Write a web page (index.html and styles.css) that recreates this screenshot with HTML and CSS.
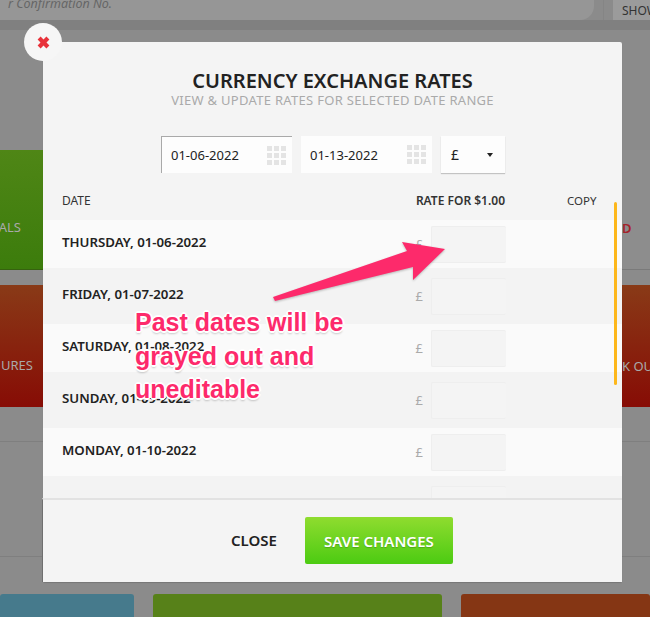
FILE: index.html
```html
<!DOCTYPE html>
<html lang="en">
<head>
    <meta charset="UTF-8">
    <title>Currency Exchange Rates</title>
    <link rel="stylesheet" href="styles.css">
</head>
<body>
    <!-- dimmed page behind the modal -->
    <div class="page">
        <div class="topbar">
            <div class="search">r Confirmation No.</div>
            <div class="show-wrap"><span class="show">SHOW</span></div>
        </div>
        <div class="band"></div>
        <div class="tiles">
            <div class="tile green"><span class="tile-label als-label">ALS</span></div>
            <div class="tile"></div>
            <div class="tile gray"><span class="tile-label red-label">D</span></div>
            <div class="tile orange"><span class="tile-label ures-label">URES</span></div>
            <div class="tile"></div>
            <div class="tile orange"><span class="tile-label">K OUT</span></div>
        </div>
        <div class="rule first-rule"></div>
        <div class="rule second-rule"></div>
        <div class="bottom-tiles">
            <div class="blue"></div>
            <div class="green-flat"></div>
            <div class="rust"></div>
        </div>
    </div>

    <div class="modal">
        <button class="close-x" type="button" aria-label="Close">
            <svg width="13" height="13" viewBox="0 0 13 13"><path d="M3.6 .6 L6.5 3.5 L9.4 .6 L12.4 3.6 L9.5 6.5 L12.4 9.4 L9.4 12.4 L6.5 9.5 L3.6 12.4 L.6 9.4 L3.5 6.5 L.6 3.6 Z" fill="#e8323a"/></svg>
        </button>

        <h1>CURRENCY EXCHANGE RATES</h1>
        <p class="subtitle">VIEW &amp; UPDATE RATES FOR SELECTED DATE RANGE</p>

        <div class="filters">
            <div class="date-box focused">
                <span>01-06-2022</span>
                <svg class="cal" width="19" height="19" viewBox="0 0 19 19"><path d="M0 0h5v5H0zM7 0h5v5H7zM14 0h5v5h-5zM0 7h5v5H0zM7 7h5v5H7zM14 7h5v5h-5zM0 14h5v5H0zM7 14h5v5H7zM14 14h5v5h-5z" fill="#e4e4e4"/></svg>
            </div>
            <div class="date-box">
                <span>01-13-2022</span>
                <svg class="cal" width="19" height="19" viewBox="0 0 19 19"><path d="M0 0h5v5H0zM7 0h5v5H7zM14 0h5v5h-5zM0 7h5v5H0zM7 7h5v5H7zM14 7h5v5h-5zM0 14h5v5H0zM7 14h5v5H7zM14 14h5v5h-5z" fill="#e4e4e4"/></svg>
            </div>
            <div class="currency"><span>£</span><i class="caret"></i></div>
        </div>

        <div class="table-head">
            <span class="col-date">DATE</span>
            <span class="col-rate">RATE FOR $1.00</span>
            <span class="col-copy">COPY</span>
        </div>

        <div class="rows">
            <div class="row"><span class="day">THURSDAY, 01-06-2022</span><span class="pound">£</span><div class="rate-input"></div></div>
            <div class="row"><span class="day">FRIDAY, 01-07-2022</span><span class="pound">£</span><div class="rate-input"></div></div>
            <div class="row"><span class="day">SATURDAY, 01-08-2022</span><span class="pound">£</span><div class="rate-input"></div></div>
            <div class="row"><span class="day">SUNDAY, 01-09-2022</span><span class="pound">£</span><div class="rate-input"></div></div>
            <div class="row"><span class="day">MONDAY, 01-10-2022</span><span class="pound">£</span><div class="rate-input"></div></div>
            <div class="row"><span class="pound pound-last">£</span><div class="rate-input"></div></div>
        </div>
        <div class="scrollbar"></div>

        <div class="modal-footer">
            <button class="btn-close" type="button">CLOSE</button>
            <button class="btn-save" type="button">SAVE CHANGES</button>
        </div>
    </div>

    <!-- annotation drawn over the screenshot -->
    <svg class="arrow" width="650" height="617" viewBox="0 0 650 617"><polygon points="273,297 407,251 402,242 445,249 413,280 413,267 275,301" fill="#fd2a6b"/></svg>
    <div class="note">Past dates will be<br>grayed out and<br>uneditable</div>
</body>
</html>
```

FILE: styles.css
```css
/* page behind the modal */
* {
    box-sizing: border-box;
}

body {
    margin: 0;
    width: 650px;
    height: 617px;
    overflow: hidden;
    position: relative;
    background-color: #8b8b8b;
    font-family: "Noto Sans", sans-serif;
}

.topbar {
    display: flex;
    height: 20px;
    overflow: hidden;
}

.search {
    flex: 0 0 594px;
    height: 20px;
    padding-left: 8px;
    background-color: #969696;
    border-bottom-right-radius: 14px;
    color: #666;
    font-style: italic;
    font-size: 12.5px;
    line-height: 7px;
}

.show-wrap {
    flex: 0 0 47px;
    margin-left: 9px;
    padding-left: 9px;
    border-left: 1px solid #858585;
    overflow: hidden;
}

.show {
    display: block;
    height: 20px;
    padding: 2px 0 0 9px;
    background-color: #9b9b9b;
    color: #333;
    font-size: 12px;
}

.band {
    height: 10px;
    background-color: #808080;
}

.tiles {
    display: grid;
    grid-template-columns: 134px 289px 189px;
    column-gap: 19px;
    row-gap: 15px;
    margin-top: 120px;
}

.tile {
    height: 120px;
    position: relative;
    overflow: hidden;
}

.tile-label {
    position: absolute;
    left: 161px;
    top: 72px;
    color: #a9a9a9;
    font-size: 13px;
    white-space: nowrap;
}

.green {
    background: linear-gradient(#4f8616, #3c7c0c);
    border-bottom: 1px solid #36620f;
}

.gray {
    background-color: #8d8d8d;
    border-bottom: 1px solid #7a7a7a;
}

.orange {
    height: 122px;
    background: linear-gradient(#893a17, #870c05);
}

.als-label {
    left: auto;
    right: 113px;
    top: 68px;
}

.ures-label {
    left: auto;
    right: 101px;
    top: 71px;
}

.red-label {
    top: 69px;
    color: #a5222a;
    font-weight: 600;
}

.rule {
    height: 1px;
    background-color: #7f7f7f;
}

.first-rule {
    margin-top: 34px;
}

.second-rule {
    margin-top: 114px;
}

.bottom-tiles {
    display: grid;
    grid-template-columns: 134px 289px 189px;
    column-gap: 19px;
    margin-top: 37px;
    height: 30px;
}

.blue {
    background-color: #467a8c;
    border-radius: 3px 3px 0 0;
}

.green-flat {
    background-color: #578119;
    border-radius: 3px 3px 0 0;
}

.rust {
    background-color: #853614;
    border-radius: 3px 3px 0 0;
}

/* modal */
.modal {
    position: absolute;
    left: 43px;
    top: 42px;
    width: 579px;
    height: 540px;
    background-color: #f4f4f4;
    border-radius: 2px;
    box-shadow: 0 1px 1px rgba(0, 0, 0, 0.15);
    padding-top: 27px;
    display: flex;
    flex-direction: column;
    align-items: stretch;
}

.close-x {
    position: absolute;
    left: -19px;
    top: -19px;
    width: 38px;
    height: 38px;
    padding: 0;
    border: none;
    border-radius: 50%;
    background-color: #f6f6f6;
    display: flex;
    align-items: center;
    justify-content: center;
}

.modal h1 {
    margin: 0;
    text-align: center;
    color: #222;
    font-size: 20px;
    line-height: 24px;
    font-weight: 600;
}

.subtitle {
    margin: 0;
    text-align: center;
    color: #aaa;
    font-size: 13px;
    line-height: 14px;
    letter-spacing: 0.3px;
}

.filters {
    display: flex;
    gap: 9px;
    margin: 29px 0 0 118px;
}

.date-box {
    width: 131px;
    height: 37px;
    padding: 0 6px 0 9px;
    background-color: #fdfdfd;
    display: flex;
    align-items: center;
    justify-content: space-between;
    color: #222;
    font-size: 13px;
}

.date-box.focused {
    border-top: 1px solid #a9a9a9;
    border-left: 1px solid #a9a9a9;
}

.currency {
    width: 64px;
    height: 37px;
    padding: 0 12px 0 10px;
    background-color: #fdfdfd;
    box-shadow: 0 1px 1px rgba(0, 0, 0, 0.2);
    display: flex;
    align-items: center;
    justify-content: space-between;
    color: #222;
    font-size: 14px;
}

.caret {
    width: 0;
    height: 0;
    border-left: 3px solid transparent;
    border-right: 3px solid transparent;
    border-top: 4px solid #222;
}

.table-head {
    display: flex;
    align-items: center;
    height: 20px;
    margin-top: 17px;
    color: #333;
    font-size: 12px;
}

.col-date {
    margin-left: 19px;
}

.col-rate {
    margin-left: auto;
    font-weight: 600;
}

.col-copy {
    width: 117px;
    padding-left: 62px;
    font-size: 11.5px;
}

.rows {
    flex: 1;
    overflow: hidden;
    margin-top: 10px;
    min-height: 0;
}

.row {
    display: flex;
    align-items: center;
    height: 56px;
    padding: 0 116px 0 19px;
    background-color: #f3f3f3;
}

.row:nth-child(odd) {
    height: 48px;
    background-color: #fafafa;
}

.day {
    margin-right: auto;
    margin-bottom: 4px;
    color: #222;
    font-size: 13.25px;
    font-weight: 600;
}

.pound {
    margin-right: 8px;
    color: #aaa;
    font-size: 13px;
}

.pound-last {
    margin-left: auto;
}

.rate-input {
    width: 75px;
    height: 37px;
    background-color: #f4f4f4;
    border: 1px solid #eee;
    border-right: none;
    border-radius: 2px;
}

.scrollbar {
    position: absolute;
    left: 571px;
    top: 160px;
    width: 3px;
    height: 183px;
    border-radius: 2px;
    background-color: #fdb71b;
}

.modal-footer {
    height: 84px;
    margin-left: -1px;
    border-top: 2px solid #e2e2e2;
    border-left: 1px solid #6f6f6f;
    background-color: #f4f4f4;
    display: flex;
    align-items: flex-start;
    padding: 17px 0 0 188px;
}

.btn-close {
    margin: 13px 28px 0 0;
    padding: 0;
    border: none;
    background: none;
    color: #222;
    font-family: inherit;
    font-size: 15px;
    font-weight: 600;
}

.btn-save {
    width: 148px;
    height: 47px;
    padding: 0;
    border: none;
    border-radius: 2px;
    background: linear-gradient(#8fdc2f, #4ccb12);
    color: #fff;
    font-family: inherit;
    font-size: 15px;
    font-weight: 600;
    text-shadow: 0 1px 1px rgba(0, 0, 0, 0.2);
}

/* annotation */
.arrow {
    position: absolute;
    left: 0;
    top: 0;
    filter: drop-shadow(0 1px 1px rgba(0, 0, 0, 0.25));
}

.note {
    position: absolute;
    left: 135px;
    top: 306px;
    color: #fd2a6b;
    font-family: "Liberation Sans", Arial, sans-serif;
    font-size: 25px;
    font-weight: 700;
    line-height: 33.5px;
    white-space: nowrap;
    text-shadow: 2px 0 0 #fff, -2px 0 0 #fff, 0 2px 0 #fff, 0 -2px 0 #fff, 1px 1px 0 #fff, -1px 1px 0 #fff, 1px -1px 0 #fff, -1px -1px 0 #fff, 0 3px 2px rgba(0, 0, 0, 0.2);
}
```
